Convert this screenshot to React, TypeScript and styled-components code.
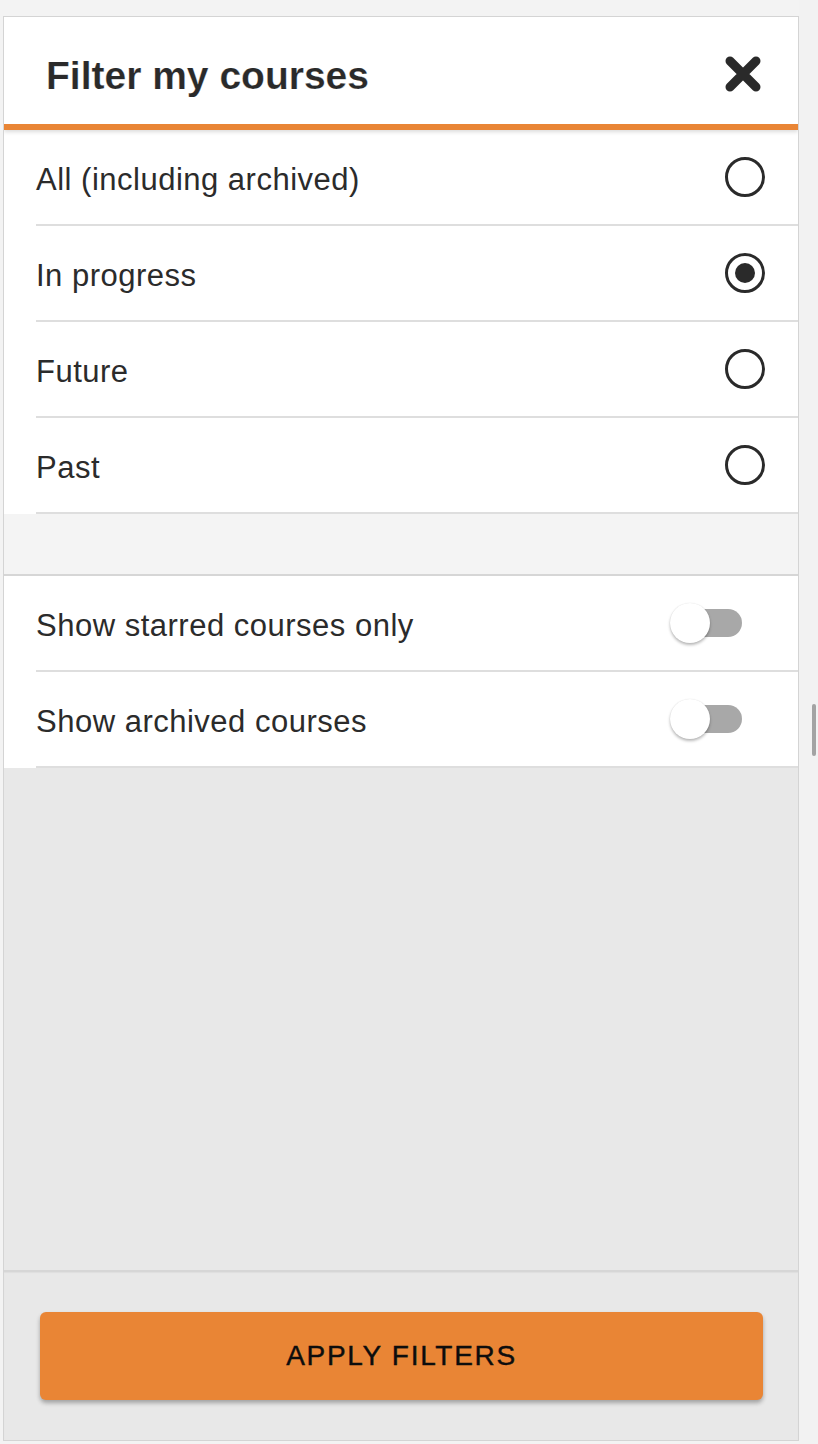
import React, { useState } from "react";
import styled, { createGlobalStyle } from "styled-components";

const GlobalStyle = createGlobalStyle`
  html, body {
    margin: 0;
    padding: 0;
    background: #f3f3f3;
    font-family: "Liberation Sans", Arial, Helvetica, sans-serif;
    color: #2b2b2b;
  }
  * { box-sizing: border-box; }
`;

const Page = styled.div`
  display: flex;
  width: 818px;
  height: 1444px;
  background: #f3f3f3;
`;

const Panel = styled.div`
  margin: 16px 0 0 3px;
  width: 796px;
  height: 1425px;
  border: 1px solid #d4d4d4;
  display: flex;
  flex-direction: column;
  background: #e8e8e8;
  overflow: hidden;
`;

const Side = styled.div`
  flex: 1;
  background: #f2f2f2;
  padding: 704px 0 0 13px;
`;

const ScrollThumb = styled.div`
  width: 4px;
  height: 52px;
  border-radius: 2px;
  background: #a3a3a3;
`;

const Header = styled.header`
  position: relative;
  z-index: 1;
  height: 113px;
  flex: none;
  background: #fff;
  border-bottom: 6px solid #e98535;
  box-shadow: 0 2px 4px rgba(0, 0, 0, 0.14);
  display: flex;
  align-items: center;
  justify-content: space-between;
  padding: 6px 37px 0 42px;
`;

const Title = styled.h1`
  margin: 0;
  padding-top: 4px;
  font-size: 39px;
  font-weight: 700;
  color: #2a2a2a;
  letter-spacing: 0;
  -webkit-text-stroke: 0.2px #fff;
`;

const CloseButton = styled.button`
  border: 0;
  background: none;
  padding: 0;
  width: 36px;
  height: 36px;
  cursor: pointer;
  display: flex;
`;

const Section = styled.div`
  background: #fff;
  flex: none;
`;

const Row = styled.label<{ $pr: number }>`
  display: flex;
  align-items: center;
  justify-content: space-between;
  height: 96px;
  margin-left: 32px;
  padding: 0 ${(p) => p.$pr}px 0 0;
  border-bottom: 2px solid #dedede;
  cursor: pointer;
`;

const RowText = styled.span`
  font-size: 31px;
  letter-spacing: 0.5px;
  color: #2b2b2b;
  padding-top: 6px;
`;

const RadioCircle = styled.span<{ $checked: boolean }>`
  width: 40px;
  height: 40px;
  border-radius: 50%;
  border: 3px solid #2a2a2a;
  display: flex;
  align-items: center;
  justify-content: center;
  &::after {
    content: "";
    width: 20px;
    height: 20px;
    border-radius: 50%;
    background: ${(p) => (p.$checked ? "#2a2a2a" : "transparent")};
  }
`;

const Spacer = styled.div`
  height: 62px;
  flex: none;
  background: #f4f4f4;
  border-bottom: 2px solid #d6d6d6;
`;

const Track = styled.span`
  position: relative;
  width: 70px;
  height: 28px;
  border-radius: 14px;
  background: #a8a8a8;
  display: flex;
  align-items: center;
`;

const Knob = styled.span`
  position: absolute;
  left: -2px;
  top: -6px;
  width: 40px;
  height: 40px;
  border-radius: 50%;
  background: #fff;
  box-shadow: 0 2px 3px rgba(0, 0, 0, 0.28), 0 0 1px rgba(0, 0, 0, 0.12);
`;

const Filler = styled.div`
  flex: 1;
  background: #e8e8e8;
`;

const Footer = styled.footer`
  flex: none;
  height: 170px;
  border-top: 2px solid #d6d6d6;
  box-shadow: inset 0 1px 1px rgba(0, 0, 0, 0.04);
  background: #e8e8e8;
  padding: 40px 35px 40px 36px;
`;

const ApplyButton = styled.button`
  width: 100%;
  height: 88px;
  border: 0;
  border-radius: 6px;
  background: #e98535;
  box-shadow: 0 3px 4px rgba(0, 0, 0, 0.3);
  font-family: "Liberation Sans", Arial, Helvetica, sans-serif;
  font-size: 28px;
  font-weight: 400;
  letter-spacing: 1.7px;
  color: #0d0d0d;
  -webkit-text-stroke: 0.4px #0d0d0d;
  cursor: pointer;
`;

const options = ["All (including archived)", "In progress", "Future", "Past"];
const toggles = ["Show starred courses only", "Show archived courses"];

export default function App() {
  const [selected, setSelected] = useState(1);
  return (
    <>
      <GlobalStyle />
      <Page>
        <Panel>
          <Header>
            <Title>Filter my courses</Title>
            <CloseButton aria-label="Close">
              <svg width="36" height="36" viewBox="0 0 36 36">
                <path
                  d="M5 5 L31 31 M31 5 L5 31"
                  stroke="#2a2a2a"
                  strokeWidth="9"
                  strokeLinecap="round"
                />
              </svg>
            </CloseButton>
          </Header>
          <Section>
            {options.map((o, i) => (
              <Row key={o} $pr={33} onClick={() => setSelected(i)}>
                <RowText>{o}</RowText>
                <RadioCircle $checked={selected === i} />
              </Row>
            ))}
          </Section>
          <Spacer />
          <Section>
            {toggles.map((t) => (
              <Row key={t} $pr={56}>
                <RowText>{t}</RowText>
                <Track>
                  <Knob />
                </Track>
              </Row>
            ))}
          </Section>
          <Filler />
          <Footer>
            <ApplyButton>APPLY FILTERS</ApplyButton>
          </Footer>
        </Panel>
        <Side>
          <ScrollThumb />
        </Side>
      </Page>
    </>
  );
}
